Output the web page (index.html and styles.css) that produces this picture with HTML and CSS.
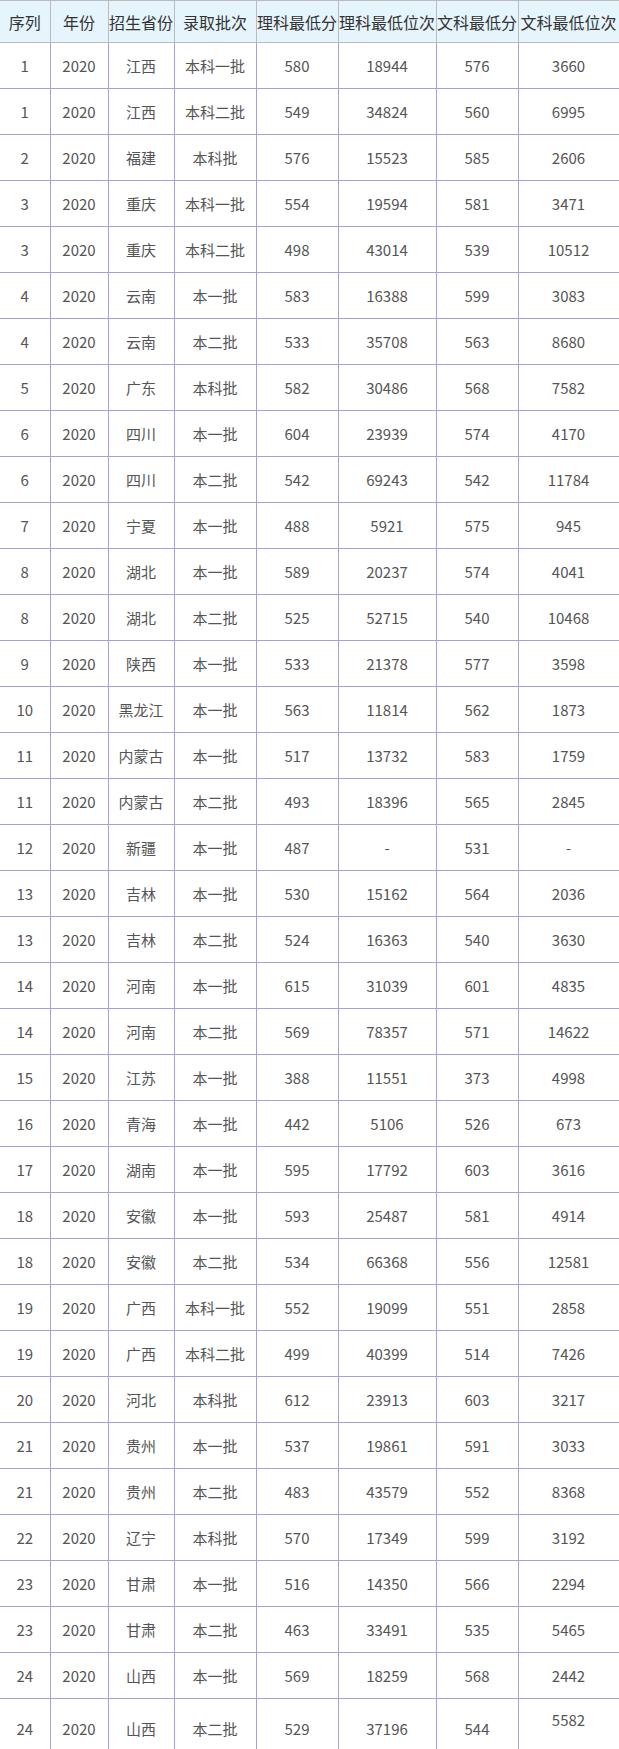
FILE: index.html
```html
<!DOCTYPE html>
<html lang="zh-CN">
<head>
<meta charset="utf-8">
<title>录取分数</title>
<link rel="stylesheet" href="styles.css">
</head>
<body>
<table class="score-table">
<colgroup>
<col class="c1"><col class="c2"><col class="c3"><col class="c4"><col class="c5"><col class="c6"><col class="c7"><col class="c8">
</colgroup>
<thead>
<tr><th>序列</th><th>年份</th><th>招生省份</th><th>录取批次</th><th>理科最低分</th><th>理科最低位次</th><th>文科最低分</th><th>文科最低位次</th></tr>
</thead>
<tbody>
<tr><td>1</td><td>2020</td><td>江西</td><td>本科一批</td><td>580</td><td>18944</td><td>576</td><td>3660</td></tr>
<tr><td>1</td><td>2020</td><td>江西</td><td>本科二批</td><td>549</td><td>34824</td><td>560</td><td>6995</td></tr>
<tr><td>2</td><td>2020</td><td>福建</td><td>本科批</td><td>576</td><td>15523</td><td>585</td><td>2606</td></tr>
<tr><td>3</td><td>2020</td><td>重庆</td><td>本科一批</td><td>554</td><td>19594</td><td>581</td><td>3471</td></tr>
<tr><td>3</td><td>2020</td><td>重庆</td><td>本科二批</td><td>498</td><td>43014</td><td>539</td><td>10512</td></tr>
<tr><td>4</td><td>2020</td><td>云南</td><td>本一批</td><td>583</td><td>16388</td><td>599</td><td>3083</td></tr>
<tr><td>4</td><td>2020</td><td>云南</td><td>本二批</td><td>533</td><td>35708</td><td>563</td><td>8680</td></tr>
<tr><td>5</td><td>2020</td><td>广东</td><td>本科批</td><td>582</td><td>30486</td><td>568</td><td>7582</td></tr>
<tr><td>6</td><td>2020</td><td>四川</td><td>本一批</td><td>604</td><td>23939</td><td>574</td><td>4170</td></tr>
<tr><td>6</td><td>2020</td><td>四川</td><td>本二批</td><td>542</td><td>69243</td><td>542</td><td>11784</td></tr>
<tr><td>7</td><td>2020</td><td>宁夏</td><td>本一批</td><td>488</td><td>5921</td><td>575</td><td>945</td></tr>
<tr><td>8</td><td>2020</td><td>湖北</td><td>本一批</td><td>589</td><td>20237</td><td>574</td><td>4041</td></tr>
<tr><td>8</td><td>2020</td><td>湖北</td><td>本二批</td><td>525</td><td>52715</td><td>540</td><td>10468</td></tr>
<tr><td>9</td><td>2020</td><td>陕西</td><td>本一批</td><td>533</td><td>21378</td><td>577</td><td>3598</td></tr>
<tr><td>10</td><td>2020</td><td>黑龙江</td><td>本一批</td><td>563</td><td>11814</td><td>562</td><td>1873</td></tr>
<tr><td>11</td><td>2020</td><td>内蒙古</td><td>本一批</td><td>517</td><td>13732</td><td>583</td><td>1759</td></tr>
<tr><td>11</td><td>2020</td><td>内蒙古</td><td>本二批</td><td>493</td><td>18396</td><td>565</td><td>2845</td></tr>
<tr><td>12</td><td>2020</td><td>新疆</td><td>本一批</td><td>487</td><td>-</td><td>531</td><td>-</td></tr>
<tr><td>13</td><td>2020</td><td>吉林</td><td>本一批</td><td>530</td><td>15162</td><td>564</td><td>2036</td></tr>
<tr><td>13</td><td>2020</td><td>吉林</td><td>本二批</td><td>524</td><td>16363</td><td>540</td><td>3630</td></tr>
<tr><td>14</td><td>2020</td><td>河南</td><td>本一批</td><td>615</td><td>31039</td><td>601</td><td>4835</td></tr>
<tr><td>14</td><td>2020</td><td>河南</td><td>本二批</td><td>569</td><td>78357</td><td>571</td><td>14622</td></tr>
<tr><td>15</td><td>2020</td><td>江苏</td><td>本一批</td><td>388</td><td>11551</td><td>373</td><td>4998</td></tr>
<tr><td>16</td><td>2020</td><td>青海</td><td>本一批</td><td>442</td><td>5106</td><td>526</td><td>673</td></tr>
<tr><td>17</td><td>2020</td><td>湖南</td><td>本一批</td><td>595</td><td>17792</td><td>603</td><td>3616</td></tr>
<tr><td>18</td><td>2020</td><td>安徽</td><td>本一批</td><td>593</td><td>25487</td><td>581</td><td>4914</td></tr>
<tr><td>18</td><td>2020</td><td>安徽</td><td>本二批</td><td>534</td><td>66368</td><td>556</td><td>12581</td></tr>
<tr><td>19</td><td>2020</td><td>广西</td><td>本科一批</td><td>552</td><td>19099</td><td>551</td><td>2858</td></tr>
<tr><td>19</td><td>2020</td><td>广西</td><td>本科二批</td><td>499</td><td>40399</td><td>514</td><td>7426</td></tr>
<tr><td>20</td><td>2020</td><td>河北</td><td>本科批</td><td>612</td><td>23913</td><td>603</td><td>3217</td></tr>
<tr><td>21</td><td>2020</td><td>贵州</td><td>本一批</td><td>537</td><td>19861</td><td>591</td><td>3033</td></tr>
<tr><td>21</td><td>2020</td><td>贵州</td><td>本二批</td><td>483</td><td>43579</td><td>552</td><td>8368</td></tr>
<tr><td>22</td><td>2020</td><td>辽宁</td><td>本科批</td><td>570</td><td>17349</td><td>599</td><td>3192</td></tr>
<tr><td>23</td><td>2020</td><td>甘肃</td><td>本一批</td><td>516</td><td>14350</td><td>566</td><td>2294</td></tr>
<tr><td>23</td><td>2020</td><td>甘肃</td><td>本二批</td><td>463</td><td>33491</td><td>535</td><td>5465</td></tr>
<tr><td>24</td><td>2020</td><td>山西</td><td>本一批</td><td>569</td><td>18259</td><td>568</td><td>2442</td></tr>
<tr><td>24</td><td>2020</td><td>山西</td><td>本二批</td><td>529</td><td>37196</td><td>544</td><td>5582<br>&nbsp;</td></tr>
</tbody>
</table>
</body>
</html>
```

FILE: styles.css
```css
html, body {
  margin: 0;
  padding: 0;
  background: #ffffff;
}

.score-table {
  border-collapse: collapse;
  table-layout: fixed;
  width: 619px;
  font-family: "Noto Sans CJK SC", "Noto Sans", sans-serif;
  color: #555555;
}

.c1 { width: 50px; }
.c2 { width: 58px; }
.c3 { width: 66px; }
.c4 { width: 82px; }
.c5 { width: 82px; }
.c6 { width: 98px; }
.c7 { width: 82px; }
.c8 { width: 101px; }

.score-table th {
  height: 41px;
  padding: 0;
  background: #e6f4fc;
  border: 1px solid #bbbbbb;
  color: #333333;
  font-size: 16px;
  font-weight: normal;
  white-space: nowrap;
  text-align: center;
  vertical-align: middle;
  line-height: 20px;
}

.score-table td {
  height: 46px;
  box-sizing: border-box;
  padding: 12px 0;
  border: 1px solid #a99fd4;
  font-size: 15px;
  line-height: 18px;
  text-align: center;
  vertical-align: middle;
}

.score-table th:first-child,
.score-table td:first-child {
  border-left: 0;
}
```
